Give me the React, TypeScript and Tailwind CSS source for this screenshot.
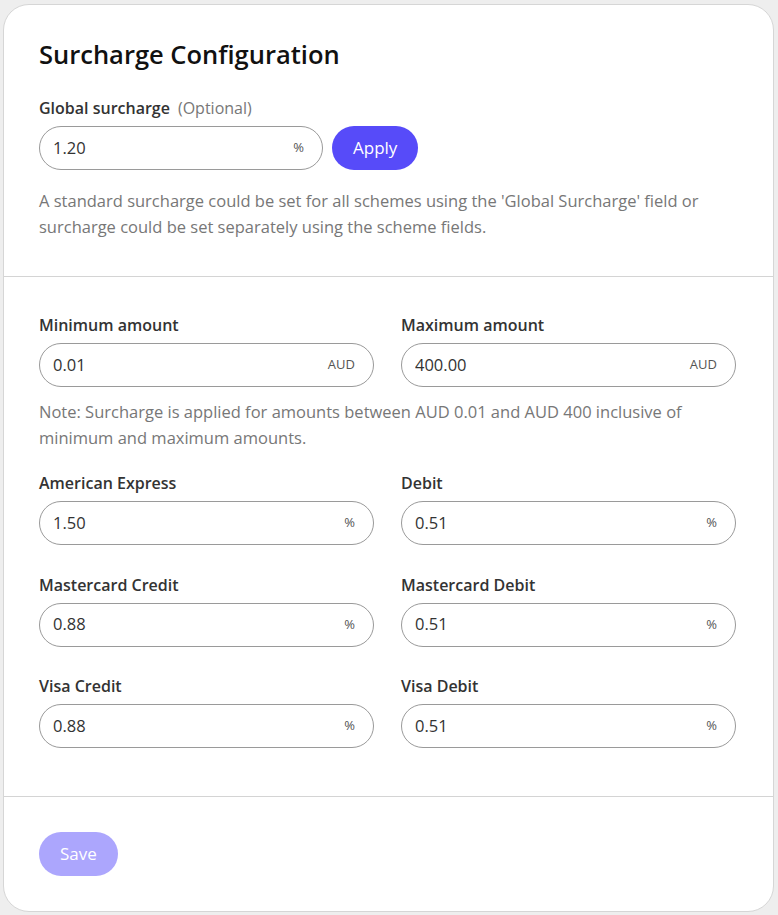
import React from 'react';

type Field = { label: string; value: string; unit: string };

const amountFields: Field[] = [
  { label: 'Minimum amount', value: '0.01', unit: 'AUD' },
  { label: 'Maximum amount', value: '400.00', unit: 'AUD' },
];

const schemeFields: Field[] = [
  { label: 'American Express', value: '1.50', unit: '%' },
  { label: 'Debit', value: '0.51', unit: '%' },
  { label: 'Mastercard Credit', value: '0.88', unit: '%' },
  { label: 'Mastercard Debit', value: '0.51', unit: '%' },
  { label: 'Visa Credit', value: '0.88', unit: '%' },
  { label: 'Visa Debit', value: '0.51', unit: '%' },
];

function UnitInput({ value, unit, className = '' }: { value: string; unit: string; className?: string }) {
  return (
    <div className={`flex h-[44px] items-center rounded-full border border-[#9a9a9a] bg-white pl-[13px] pr-[18px] ${className}`}>
      <input
        defaultValue={value}
        className="w-full min-w-0 bg-transparent text-[16.5px] text-[#333] outline-none"
      />
      <span className="ml-2 text-[13px] text-[#555]">{unit}</span>
    </div>
  );
}

function LabeledField({ field }: { field: Field }) {
  return (
    <div className="flex flex-col">
      <label className="mb-[6px] text-[16px] leading-[24px] font-semibold text-[#333]">{field.label}</label>
      <UnitInput value={field.value} unit={field.unit} />
    </div>
  );
}

export default function App() {
  return (
    <div
      className="min-h-screen bg-[#eeeeee] pt-[4px] pb-[4px] pl-[3px] pr-[4px]"
      style={{ fontFamily: '"Open Sans", "Noto Sans", sans-serif' }}
    >
      <div className="rounded-[26px] border border-[#d6d6d6] bg-white">
        {/* Global surcharge */}
        <section className="px-[35px] pt-[31px] pb-[36px]">
          <h1 className="text-[25.5px] leading-[36px] font-semibold text-[#111]">Surcharge Configuration</h1>
          <div className="mt-[24px] text-[16px] leading-[24px]">
            <span className="font-semibold text-[#333]">Global surcharge</span>
            <span className="ml-[8px] text-[#777]">(Optional)</span>
          </div>
          <div className="mt-[6px] flex items-center gap-[9px]">
            <UnitInput value="1.20" unit="%" className="w-[284px]" />
            <button className="h-[44px] rounded-full bg-[#574bf9] px-[21px] text-[17px] text-white">Apply</button>
          </div>
          <p className="mt-[18px] text-[16.5px] leading-[26px] text-[#777]">
            A standard surcharge could be set for all schemes using the 'Global Surcharge' field or surcharge could be set
            separately using the scheme fields.
          </p>
        </section>

        <hr className="border-[#d4d4d4]" />

        {/* Amounts and schemes */}
        <section className="pl-[35px] pr-[37px] pt-[36px] pb-[48px]">
          <div className="grid grid-cols-2 gap-x-[27px]">
            {amountFields.map((f) => (
              <LabeledField key={f.label} field={f} />
            ))}
          </div>
          <p className="mt-[12px] text-[16.5px] leading-[26px] text-[#777]">
            Note: Surcharge is applied for amounts between AUD 0.01 and AUD 400 inclusive of minimum and maximum amounts.
          </p>
          <div className="mt-[20px] grid grid-cols-2 gap-x-[27px] gap-y-[27.5px]">
            {schemeFields.map((f) => (
              <LabeledField key={f.label} field={f} />
            ))}
          </div>
        </section>

        <hr className="border-[#d4d4d4]" />

        <div className="px-[35px] pt-[35px] pb-[35px]">
          <button className="h-[44px] rounded-full bg-[#aca6fd] px-[21px] text-[17px] text-white">Save</button>
        </div>
      </div>
    </div>
  );
}
